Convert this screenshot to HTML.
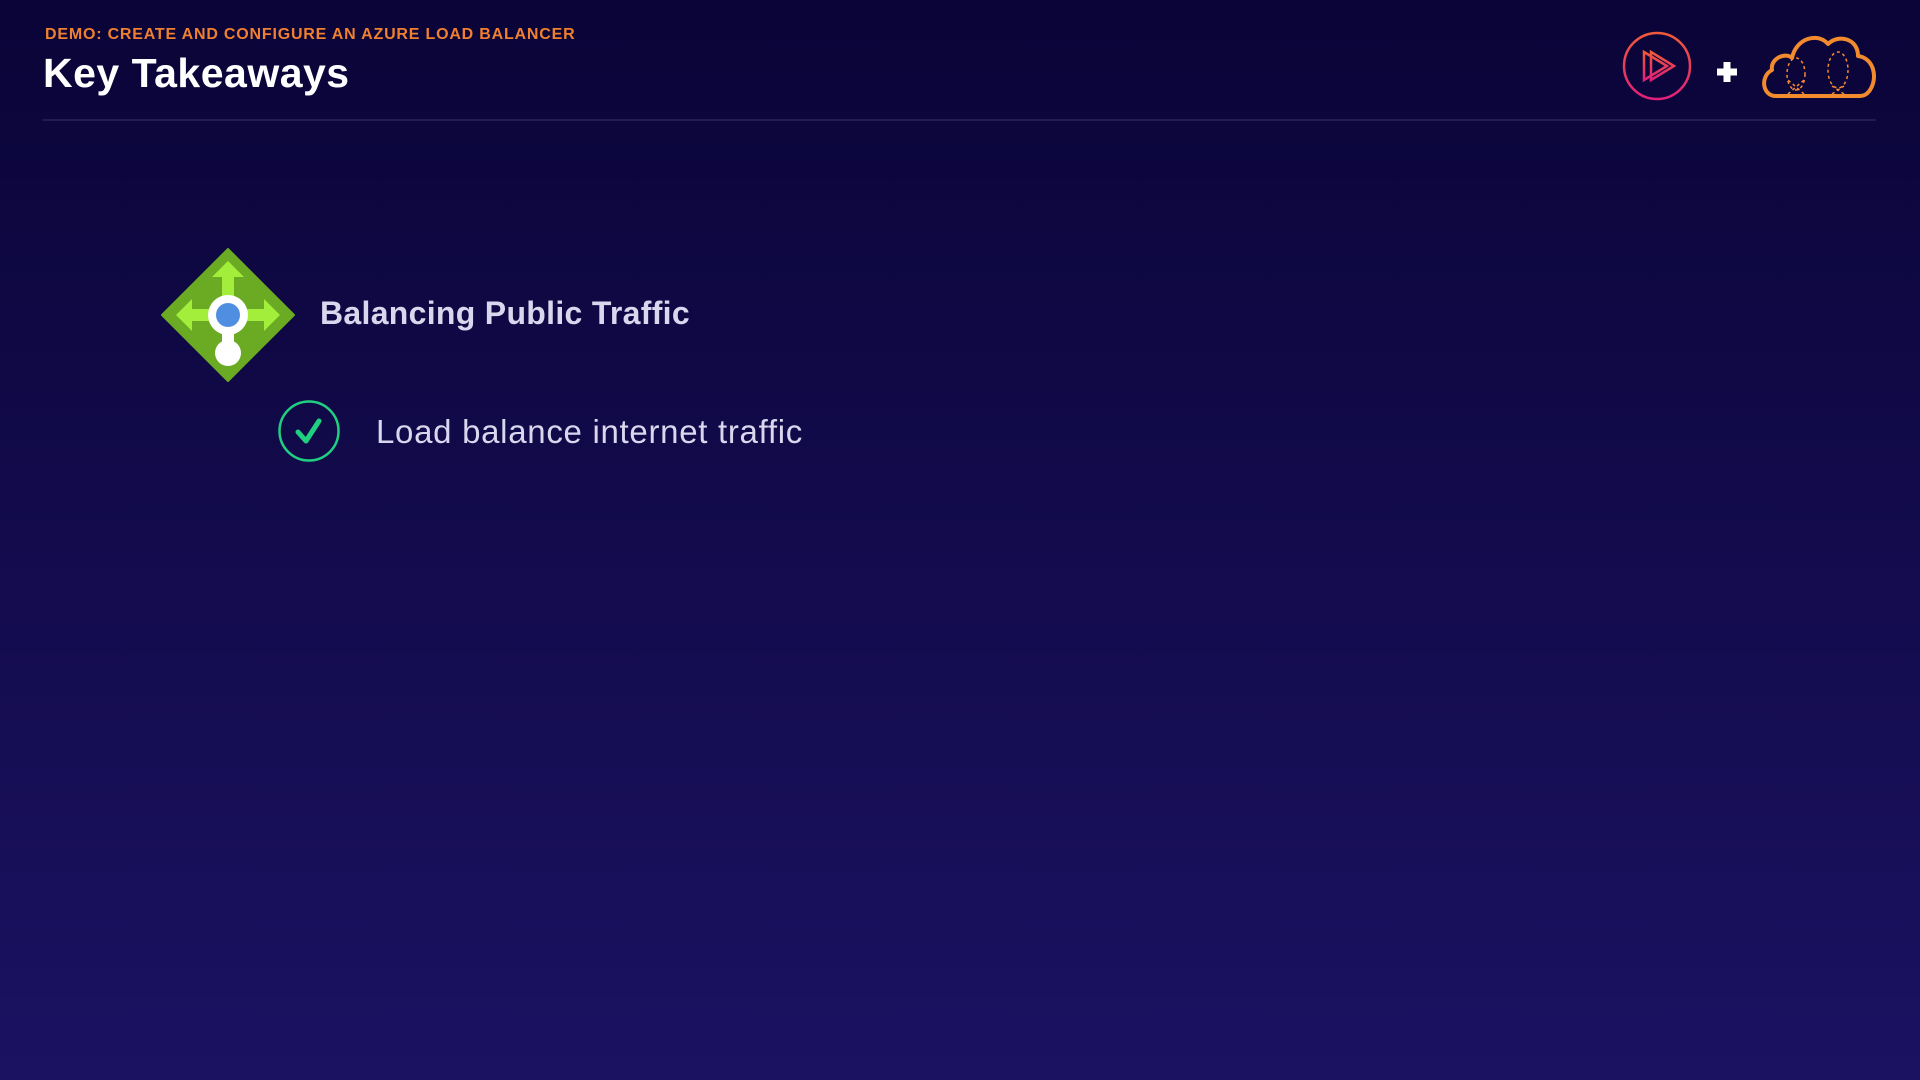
<!DOCTYPE html>
<html><head><meta charset="utf-8"><style>
html,body{margin:0;padding:0}
body{width:1920px;height:1080px;overflow:hidden;position:relative;background:linear-gradient(180deg,#0a0438 0%,#130b4c 50%,#1b1262 100%);font-family:"Liberation Sans",sans-serif}
.sub{position:absolute;left:45px;top:26px;font-size:16px;font-weight:bold;color:#f0802f;letter-spacing:0.8px}
.title{position:absolute;left:43px;top:50px;font-size:41px;font-weight:bold;color:#fff;letter-spacing:0.5px}
.line{position:absolute;left:43px;top:119px;width:1833px;height:2px;background:#221a55}
.h{position:absolute;left:320px;top:295px;font-size:32px;font-weight:bold;color:#d9d6ee;letter-spacing:0.3px}
.t{position:absolute;left:376px;top:413px;font-size:33px;color:#d9d6ee;letter-spacing:0.7px}
svg{position:absolute}
</style></head><body>
<div class="sub">DEMO: CREATE AND CONFIGURE AN AZURE LOAD BALANCER</div>
<div class="title">Key Takeaways</div>
<div class="line"></div>

<svg style="left:1620px;top:30px" width="76" height="74" viewBox="0 0 76 74">
<defs><linearGradient id="pg" x1="0" y1="0" x2="0" y2="1"><stop offset="0" stop-color="#f05a3a"/><stop offset="1" stop-color="#e0207a"/></linearGradient></defs>
<circle cx="37" cy="36" r="33" fill="none" stroke="url(#pg)" stroke-width="2.5"/>
<path d="M24 22 L24 50 L47 36 Z M31 22 L31 50 L54 36 Z" fill="none" stroke="url(#pg)" stroke-width="2.5" stroke-linejoin="miter"/>
</svg>
<svg style="left:1715px;top:60px" width="24" height="24" viewBox="0 0 24 24"><path d="M12 2V22M2 12H22" stroke="#fff" stroke-width="7"/></svg>
<svg style="left:1758px;top:28px" width="122" height="72" viewBox="0 0 122 72">
<path d="M18 68 C4 68 2 48 14 42 C12 30 28 24 34 30 C38 10 60 4 70 16 C80 6 100 10 100 28 C116 30 120 50 112 62 C108 68 104 68 100 68 Z" fill="none" stroke="#f28a2e" stroke-width="4" stroke-linejoin="round"/>
<g fill="none" stroke="#f28a2e" stroke-width="1.5" stroke-dasharray="3 3">
<ellipse cx="38" cy="46" rx="9" ry="16"/><path d="M30 66 L46 52 M46 66 L30 52"/>
<ellipse cx="80" cy="42" rx="10" ry="18"/><path d="M74 66 L86 58 M86 66 L74 58"/>
</g></svg>

<svg style="left:160px;top:247px" width="136" height="136" viewBox="0 0 136 136">
<path d="M68 2 L134 68 L68 134 L2 68 Z" fill="#6aab23" stroke="#6aab23" stroke-width="2" stroke-linejoin="round"/>
<g fill="#a3ee3a">
<path d="M68 14 L84 30 L74 30 L74 56 L62 56 L62 30 L52 30 Z"/>
<path d="M16 68 L32 52 L32 62 L58 62 L58 74 L32 74 L32 84 Z"/>
<path d="M120 68 L104 52 L104 62 L78 62 L78 74 L104 74 L104 84 Z"/>
</g>
<rect x="62" y="70" width="12" height="30" fill="#fff"/>
<circle cx="68" cy="68" r="20" fill="#fff"/>
<circle cx="68" cy="68" r="12" fill="#4f8ee0"/>
<circle cx="68" cy="106" r="13" fill="#fff"/>
</svg>

<svg style="left:276px;top:398px" width="66" height="66" viewBox="0 0 66 66">
<circle cx="33" cy="33" r="29.5" fill="none" stroke="#1fd080" stroke-width="2.5"/>
<path d="M22 34 L30 43 L43 23" fill="none" stroke="#1fd080" stroke-width="5" stroke-linecap="round" stroke-linejoin="round"/>
</svg>

<div class="h">Balancing Public Traffic</div>
<div class="t">Load balance internet traffic</div>
</body></html>
